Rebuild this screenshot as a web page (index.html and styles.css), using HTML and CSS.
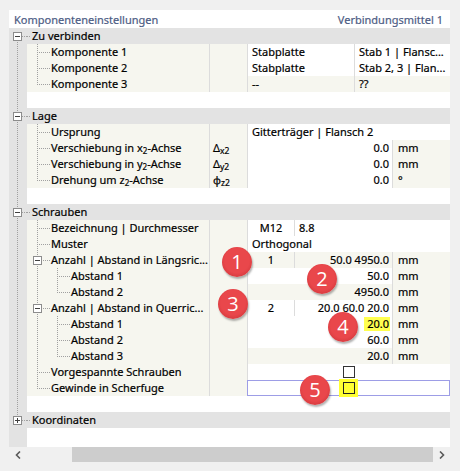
FILE: index.html
```html
<!DOCTYPE html>
<html lang="de">
<head>
<meta charset="utf-8">
<title>Komponenteneinstellungen</title>
<link rel="stylesheet" href="styles.css">
</head>
<body>
<div class="panel">
  <div class="title"><span>Komponenteneinstellungen</span><span>Verbindungsmittel 1</span></div>
  <div class="grid">
    <div class="row hdr first"><span class="gut"><i class="box"></i></span><span class="lbl">Zu verbinden</span></div>
    <div class="row"><span class="gut"></span><span class="name"><i class="t tee"></i>Komponente 1</span><span class="sym"></span><span class="c c1 w">Stabplatte</span><span class="c c2 w">Stab 1 | Flansc...</span></div>
    <div class="row"><span class="gut"></span><span class="name"><i class="t tee"></i>Komponente 2</span><span class="sym"></span><span class="c c1 w">Stabplatte</span><span class="c c2 w">Stab 2, 3 | Flan...</span></div>
    <div class="row"><span class="gut"></span><span class="name"><i class="t elb"></i>Komponente 3</span><span class="sym"></span><span class="c c1 cr">--</span><span class="c c2 cr">??</span></div>
    <div class="row"><span class="gut"></span><span class="blank"></span></div>

    <div class="row hdr"><span class="gut"><i class="box"></i></span><span class="lbl">Lage</span></div>
    <div class="row"><span class="gut"></span><span class="name"><i class="t tee"></i>Ursprung</span><span class="sym"></span><span class="c full w">Gitterträger | Flansch 2</span></div>
    <div class="row"><span class="gut"></span><span class="name"><i class="t tee"></i><span>Verschiebung in x<sub>2</sub>-Achse</span></span><span class="sym">Δ<sub>x2</sub></span><span class="c num w">0.0</span><span class="c unit">mm</span></div>
    <div class="row"><span class="gut"></span><span class="name"><i class="t tee"></i><span>Verschiebung in y<sub>2</sub>-Achse</span></span><span class="sym">Δ<sub>y2</sub></span><span class="c num w">0.0</span><span class="c unit">mm</span></div>
    <div class="row"><span class="gut"></span><span class="name"><i class="t elb"></i><span>Drehung um z<sub>2</sub>-Achse</span></span><span class="sym">φ<sub>z2</sub></span><span class="c num w">0.0</span><span class="c unit">°</span></div>
    <div class="row"><span class="gut"></span><span class="blank"></span></div>

    <div class="row hdr"><span class="gut"><i class="box"></i></span><span class="lbl">Schrauben</span></div>
    <div class="row"><span class="gut"></span><span class="name"><i class="t tee"></i>Bezeichnung | Durchmesser</span><span class="sym"></span><span class="c ca w">M12</span><span class="c cbl w">8.8</span></div>
    <div class="row"><span class="gut"></span><span class="name"><i class="t tee"></i>Muster</span><span class="sym"></span><span class="c full w">Orthogonal</span></div>
    <div class="row"><span class="gut"></span><span class="name"><i class="t tbox"><i class="box"></i></i>Anzahl | Abstand in Längsric...</span><span class="sym"></span><span class="c ca cr">1</span><span class="c cb cr">50.0 4950.0</span><span class="c unit">mm</span></div>
    <div class="row"><span class="gut"></span><span class="name"><i class="t pipe"></i><i class="t tee"></i>Abstand 1</span><span class="sym"></span><span class="c num w">50.0</span><span class="c unit">mm</span></div>
    <div class="row"><span class="gut"></span><span class="name"><i class="t pipe"></i><i class="t elb"></i>Abstand 2</span><span class="sym"></span><span class="c num cr">4950.0</span><span class="c unit">mm</span></div>
    <div class="row"><span class="gut"></span><span class="name"><i class="t tbox"><i class="box"></i></i>Anzahl | Abstand in Querric...</span><span class="sym"></span><span class="c ca w">2</span><span class="c cb w">20.0 60.0 20.0</span><span class="c unit">mm</span></div>
    <div class="row"><span class="gut"></span><span class="name"><i class="t pipe"></i><i class="t tee"></i>Abstand 1</span><span class="sym"></span><span class="c num w hlcell"><span class="hl">20.0</span></span><span class="c unit">mm</span></div>
    <div class="row"><span class="gut"></span><span class="name"><i class="t pipe"></i><i class="t tee"></i>Abstand 2</span><span class="sym"></span><span class="c num w">60.0</span><span class="c unit">mm</span></div>
    <div class="row"><span class="gut"></span><span class="name"><i class="t pipe"></i><i class="t elb"></i>Abstand 3</span><span class="sym"></span><span class="c num cr">20.0</span><span class="c unit">mm</span></div>
    <div class="row"><span class="gut"></span><span class="name"><i class="t tee"></i>Vorgespannte Schrauben</span><span class="sym"></span><span class="c full w chk"><i class="cbx"></i></span></div>
    <div class="row"><span class="gut"></span><span class="name"><i class="t elb"></i>Gewinde in Scherfuge</span><span class="sym"></span><span class="c full w chk sel"><span class="yhl"><i class="cbx ycb"></i></span></span></div>
    <div class="row"><span class="gut"></span><span class="blank"></span></div>

    <div class="row hdr last"><span class="gut"><i class="box plus"></i></span><span class="lbl">Koordinaten</span></div>
    <div class="row tall"><span class="gut nol"></span><span class="blank"></span></div>

    <span class="badge b1">1</span>
    <span class="badge b2">2</span>
    <span class="badge b3">3</span>
    <span class="badge b4">4</span>
    <span class="badge b5">5</span>
  </div>
  <div class="hs">
    <span class="arr"><svg width="6" height="8" viewBox="0 0 6 8"><polyline points="5,0.5 1.5,4 5,7.5" fill="none" stroke="#5a5a5a" stroke-width="1.6"/></svg></span>
    <span class="track"></span>
    <span class="thumb"></span>
    <span class="arr"><svg width="6" height="8" viewBox="0 0 6 8"><polyline points="1,0.5 4.5,4 1,7.5" fill="none" stroke="#5a5a5a" stroke-width="1.6"/></svg></span>
  </div>
</div>
</body>
</html>
```

FILE: styles.css
```css
* { box-sizing: border-box; }

:root {
  --dv: repeating-linear-gradient(to bottom, #a0a0a0 0 1px, transparent 1px 2px);
  --dh: repeating-linear-gradient(to right, #a0a0a0 0 1px, transparent 1px 2px);
  --cream: #f6f6ef;
  --sep: #dcdcdc;
}

html, body {
  margin: 0;
  background: #f0f0f0;
}

body {
  width: 460px;
  height: 471px;
  overflow: hidden;
  font-family: "Noto Sans", "Open Sans", sans-serif;
  font-size: 11px;
  color: #000;
}

.grid, .title {
  -webkit-text-stroke: 0.2px currentColor;
}

.panel {
  margin: 10px 0 0 9px;
  width: 441px;
}

.title {
  height: 18px;
  background: #fff;
  display: flex;
  justify-content: space-between;
  align-items: center;
  padding: 0 7px 0 5px;
  color: #4d5c84;
  font-size: 11px;
}

.grid {
  position: relative;
  background: #fff;
}

.row {
  display: flex;
  height: 16px;
  line-height: 16px;
  white-space: nowrap;
}

.row.tall { height: 19px; }

.gut {
  flex: none;
  width: 18px;
  background: var(--dv) 8px 0 / 1px 100% no-repeat, #e3e3e3;
}

.gut.nol { background: #e3e3e3; }

.hdr { background: #e3e3e3; }

.hdr .gut {
  display: flex;
  align-items: center;
  padding-left: 4px;
  background: var(--dv) 8px 0 / 1px 100% no-repeat, var(--dh) 13px 8px / 5px 1px no-repeat, #e3e3e3;
}

.hdr.first .gut {
  background: var(--dv) 8px 12px / 1px 4px no-repeat, var(--dh) 13px 8px / 5px 1px no-repeat, #e3e3e3;
}

.hdr.last .gut {
  background: var(--dv) 8px 0 / 1px 4px no-repeat, var(--dh) 13px 8px / 5px 1px no-repeat, #e3e3e3;
}

.lbl {
  padding-left: 5px;
  background: var(--dh) 0 8px / 3px 1px no-repeat;
}

.box {
  display: block;
  flex: none;
  width: 9px;
  height: 9px;
  border: 1px solid #8c8c8c;
  background: linear-gradient(#404040, #404040) center / 5px 1px no-repeat, #fff;
}

.box.plus {
  background: linear-gradient(#404040, #404040) center / 5px 1px no-repeat,
              linear-gradient(#404040, #404040) center / 1px 5px no-repeat, #fff;
}

.name {
  flex: none;
  width: 182px;
  background: var(--cream);
  display: flex;
  align-items: center;
  overflow: hidden;
}

.t {
  display: block;
  flex: none;
  height: 16px;
}

.pipe {
  width: 20px;
  background: var(--dv) 10px 0 / 1px 16px no-repeat;
}

.tee {
  width: 24px;
  background: var(--dv) 10px 0 / 1px 16px no-repeat, var(--dh) 12px 8px / 11px 1px no-repeat;
}

.elb {
  width: 24px;
  background: var(--dv) 10px 0 / 1px 9px no-repeat, var(--dh) 12px 8px / 11px 1px no-repeat;
}

.tbox {
  width: 24px;
  display: flex;
  align-items: center;
  padding-left: 6px;
  background: var(--dv) 10px 0 / 1px 16px no-repeat, var(--dh) 16px 8px / 7px 1px no-repeat;
}

sub {
  font-size: 8px;
  line-height: 0;
  vertical-align: -2px;
}

.sym {
  flex: none;
  width: 38px;
  border-left: 1px solid var(--sep);
  background: var(--cream);
  padding-left: 3px;
}

.sym sub { font-size: 8.5px; vertical-align: -2px; }

.blank {
  flex: 1;
  background: #fff;
}

.c {
  flex: none;
  border-left: 1px solid var(--sep);
  overflow: hidden;
}

.w { background: #fff; }
.cr { background: var(--cream); }

.c1 { width: 107px; padding-left: 4px; }
.c2 { width: 96px; padding-left: 4px; }
.full { width: 203px; padding-left: 4px; }
.num { width: 145px; text-align: right; padding-right: 3px; }
.unit { width: 58px; padding-left: 5px; background: var(--cream); }
.ca { width: 47px; text-align: center; }
.cb { width: 98px; text-align: right; padding-right: 3px; }
.cbl { width: 156px; padding-left: 4px; }

.hlcell { padding-right: 2px; overflow: visible; }

.hl {
  display: inline-block;
  line-height: 14px;
  padding: 0 1px 0 3px;
  background: #ffff50;
}

.chk {
  display: flex;
  justify-content: center;
  align-items: center;
  padding-left: 0;
  overflow: visible;
}

.sel {
  border: 1px solid #9d9de6;
}

.cbx {
  display: block;
  width: 12px;
  height: 12px;
  border: 1px solid #333;
  background: #fff;
}

.yhl {
  position: relative;
  z-index: 1;
  display: block;
  padding: 3px 3px 3px 4px;
  background: #ffff33;
}

.ycb {
  background: #ffff33;
  border-color: #222;
}

.badge {
  position: absolute;
  z-index: 2;
  width: 30px;
  height: 30px;
  border-radius: 50%;
  background: radial-gradient(circle at 50% 45%, #e9474b 0 55%, #d53a3e 78%, #b3282c 100%);
  box-shadow: 1px 2px 2px rgba(0, 0, 0, 0.3);
  color: #fff;
  font-family: "Open Sans", "Noto Sans", sans-serif;
  font-size: 20px;
  line-height: 30px;
  text-align: center;
  -webkit-text-stroke: 0;
}

.b1 { left: 213px; top: 219px; }
.b2 { left: 298px; top: 236px; }
.b3 { left: 209px; top: 261px; }
.b4 { left: 319px; top: 284px; }
.b5 { left: 291px; top: 347px; }

.hs {
  display: flex;
  height: 15px;
  background: #f0f0f0;
}

.arr {
  flex: none;
  width: 17px;
  display: flex;
  align-items: center;
  justify-content: center;
}

.arr svg { display: block; }

.track { flex: none; width: 46px; }

.thumb {
  flex: none;
  width: 361px;
  background: #cdcdcd;
}
```
